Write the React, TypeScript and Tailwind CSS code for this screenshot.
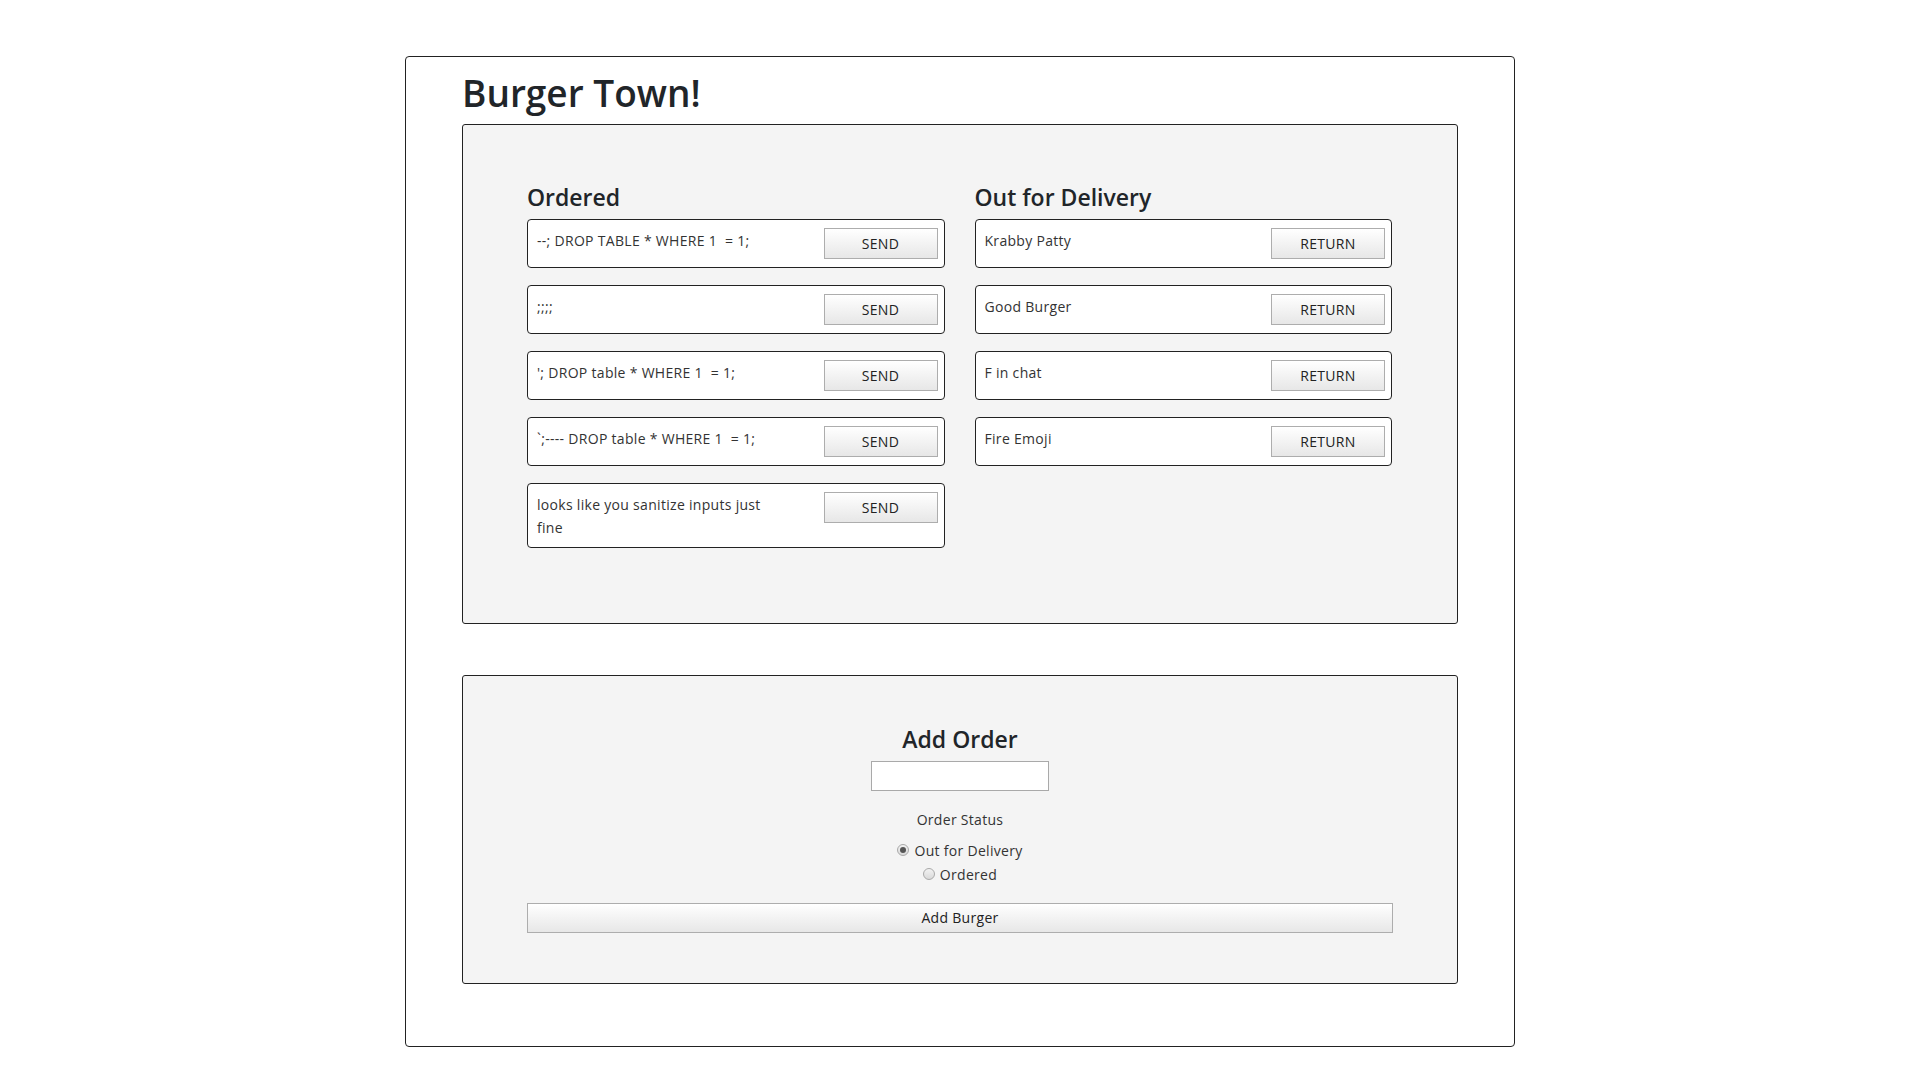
import React from "react";

const ordered = [
  "--; DROP TABLE * WHERE 1  = 1;",
  ";;;;",
  "'; DROP table * WHERE 1  = 1;",
  "`;---- DROP table * WHERE 1  = 1;",
  "looks like you sanitize inputs just fine",
];

const delivery = ["Krabby Patty", "Good Burger", "F in chat", "Fire Emoji"];

const btn =
  "border border-[#adadad] bg-gradient-to-b from-[#ffffff] to-[#e7e7e7] text-[14px] tracking-[0.3px] text-[#222] leading-none";

function OrderCard({ label, action }: { label: string; action: string }) {
  return (
    <div className="flex items-start justify-between rounded-[4px] border border-[#222] bg-white py-2 pl-[9px] pr-[6px]">
      <div className="w-[240px] whitespace-pre-wrap pt-[1px] text-[14px] leading-[23px] tracking-[0.3px] text-[#333]">
        {label}
      </div>
      <button className={`${btn} h-[31px] w-[114px] uppercase`}>{action}</button>
    </div>
  );
}

function Radio({ checked, label }: { checked?: boolean; label: string }) {
  return (
    <label className="flex h-[24px] items-center justify-center gap-[5px] text-[14px] tracking-[0.3px] text-[#333]">
      <span className="flex h-[12px] w-[12px] items-center justify-center rounded-full border border-[#a9a9a9] bg-gradient-to-b from-[#f2f2f2] to-[#d9d9d9]">
        {checked && <span className="h-[6px] w-[6px] rounded-full bg-[#555]" />}
      </span>
      {label}
    </label>
  );
}

export default function App() {
  return (
    <div className="min-h-screen bg-white pt-[56px] font-['Open_Sans','Noto_Sans',sans-serif]">
      <div className="mx-auto w-[1110px] rounded-[4px] border border-[#222] px-[56px] pb-[62px] pt-[13px]">
        <h1 className="mb-[9px] text-[37px] font-semibold leading-[45px] text-[#212529]">Burger Town!</h1>

        {/* Orders board */}
        <div className="rounded-[3px] border border-[#222] bg-[#f4f4f4] pb-[75px] pl-[64px] pr-[65px] pt-[58px]">
          <div className="grid grid-cols-2 items-start gap-x-[30px]">
            <div>
              <h4 className="mb-[7px] text-[23px] font-semibold leading-[29px] text-[#212529]">Ordered</h4>
              <div className="flex flex-col gap-[17px]">
                {ordered.map((o) => (
                  <OrderCard key={o} label={o} action="Send" />
                ))}
              </div>
            </div>
            <div>
              <h4 className="mb-[7px] text-[23px] font-semibold leading-[29px] text-[#212529]">Out for Delivery</h4>
              <div className="flex flex-col gap-[17px]">
                {delivery.map((o) => (
                  <OrderCard key={o} label={o} action="Return" />
                ))}
              </div>
            </div>
          </div>
        </div>

        {/* Add order form */}
        <div className="mt-[51px] rounded-[3px] border border-[#222] bg-[#f4f4f4] px-[64px] pb-[50px] pt-[49px]">
          <div className="flex flex-col items-center">
            <h4 className="mb-[7px] text-[23px] font-semibold leading-[29px] text-[#212529]">Add Order</h4>
            <input className="h-[30px] w-[178px] border border-[#a9a9a9] bg-white" />
            <p className="mt-[17px] text-[14px] leading-[23px] tracking-[0.3px] text-[#333]">Order Status</p>
            <div className="mt-[7px] flex flex-col">
              <Radio checked label="Out for Delivery" />
              <Radio label="Ordered" />
            </div>
            <button className={`${btn} mt-[17px] h-[30px] w-full`}>Add Burger</button>
          </div>
        </div>
      </div>
    </div>
  );
}
